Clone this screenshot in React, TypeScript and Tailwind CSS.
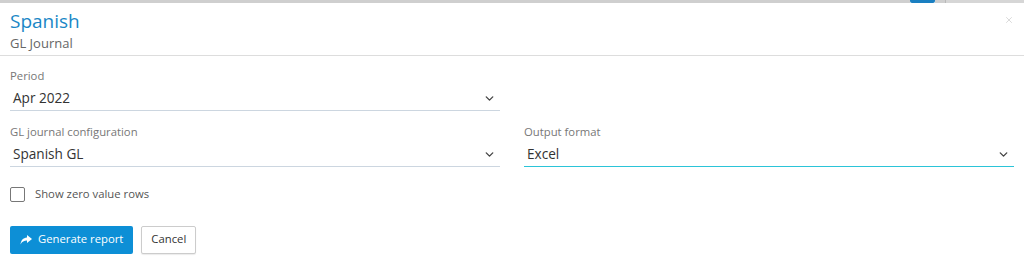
import { ChevronDown, X } from 'lucide-react';

function Field({ label, value, focused }: { label: string; value: string; focused?: boolean }) {
  return (
    <div className="flex flex-col">
      <label className="text-[11.3px] leading-[16px] text-[#777]">{label}</label>
      <div
        className={`mt-[3px] flex h-[24px] items-center justify-between border-b pl-[3px] pr-[4px] ${
          focused ? 'border-[#2bc4d8]' : 'border-[#ccd6e0]'
        }`}
      >
        <span className="text-[13.6px] text-[#333]">{value}</span>
        <ChevronDown size={13} strokeWidth={2.5} className="text-[#444]" />
      </div>
    </div>
  );
}

export default function App() {
  return (
    <div className="relative h-[264px] w-[1024px] overflow-hidden bg-white font-['Open_Sans',sans-serif]">
      <div className="flex h-[3px]">
        <div className="flex-1 bg-[#cfcfcf]" />
        <div className="h-[3px] w-[25px] rounded-b-[2px] bg-[#1a7fc1]" />
        <div className="w-[10px] bg-[#cfcfcf]" />
        <div className="w-[79px] border-l border-[#b9b9b9] bg-[#d6d6d6]" />
      </div>
      <header className="flex items-start justify-between border-b border-[#ddd] px-[10px] pb-[3px] pt-[6px]">
        <div>
          <h1 className="text-[19px] leading-[25px] text-[#1a87c6]">Spanish</h1>
          <p className="text-[13px] leading-[18px] text-[#666]">GL Journal</p>
        </div>
        <button className="mt-[6px] text-[#c4c4c4]">
          <X size={10} strokeWidth={1.5} />
        </button>
      </header>
      <main className="px-[10px] pt-[12px]">
        <div className="grid grid-cols-2 gap-x-[24px] gap-y-[13px]">
          <Field label="Period" value="Apr 2022" />
          <div />
          <Field label="GL journal configuration" value="Spanish GL" />
          <Field label="Output format" value="Excel" focused />
        </div>
        <label className="mt-[19px] flex items-center gap-[10px]">
          <span className="h-[15px] w-[15px] rounded-[2px] border border-[#777]" />
          <span className="text-[11.3px] text-[#555]">Show zero value rows</span>
        </label>
        <div className="mt-[23px] flex gap-[8px]">
          <button className="flex h-[28px] items-center gap-[6px] rounded-[2px] bg-[#0d8fd6] px-[10px] text-[11.3px] text-white">
            <svg width="12" height="10" viewBox="0 0 12 10" fill="white">
              <path d="M7 0 L12 4 L7 8 V5.5 C4 5.5 2 6.5 0.5 9.5 C1 5.5 3 3 7 2.6 Z" />
            </svg>
            Generate report
          </button>
          <button className="h-[28px] rounded-[2px] border border-[#ccc] bg-white px-[9px] text-[11.3px] text-[#333] shadow-[0_1px_1px_rgba(0,0,0,0.08)]">
            Cancel
          </button>
        </div>
      </main>
    </div>
  );
}
